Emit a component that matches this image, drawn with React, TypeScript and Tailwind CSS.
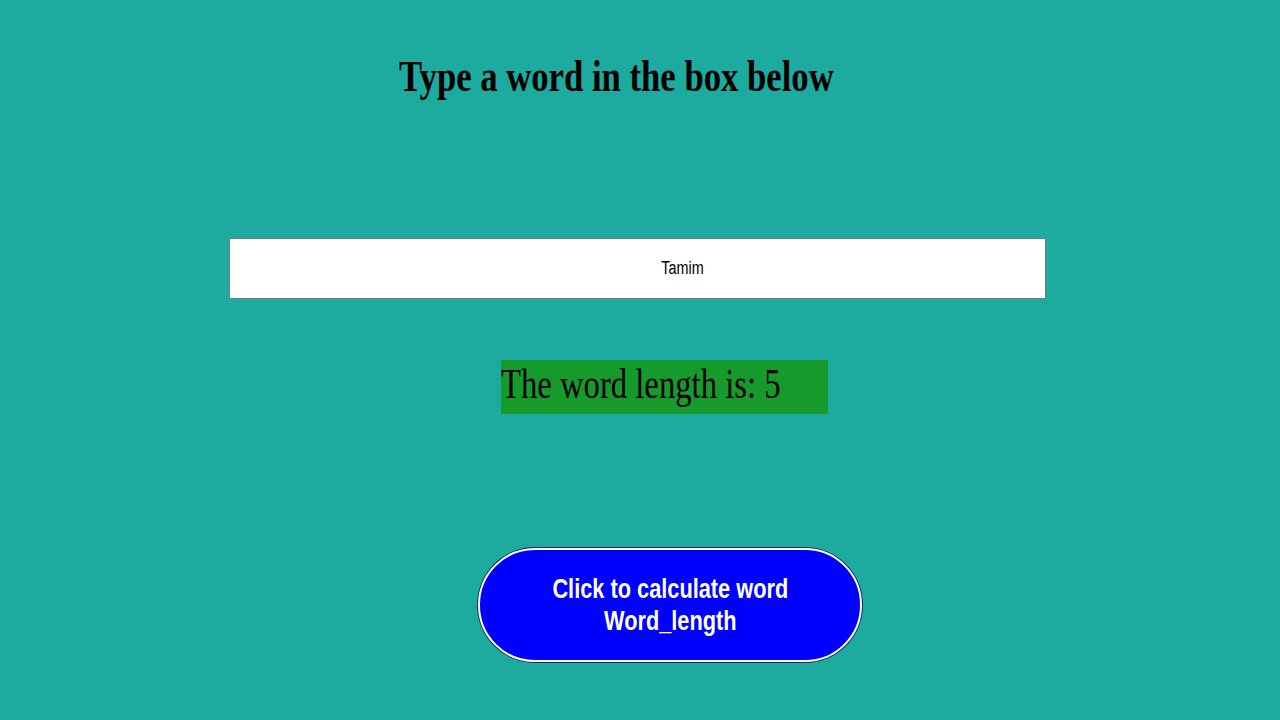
import React from "react";

export default function App() {
  return (
    <div className="w-[1280px] h-[720px] bg-[#1cab9e] overflow-hidden flex flex-col items-start">
      <h1
        className="mt-[52px] ml-[399px] h-[50px] leading-[50px] text-[44px] font-bold text-black whitespace-nowrap origin-left scale-x-[0.788] inline-block"
        style={{ fontFamily: '"Liberation Serif", "Times New Roman", serif' }}
      >
        Type a word in the box below
      </h1>
      <div className="mt-[136px] ml-[229px] w-[817px] h-[61px] bg-white border border-[#7a7a7a] flex items-center justify-center">
        <span
          className="ml-[90px] text-[18px] text-black inline-block scale-x-[0.8]"
          style={{ fontFamily: '"Liberation Sans", Arial, sans-serif' }}
        >
          Tamim
        </span>
      </div>
      <div className="mt-[61px] ml-[501px] w-[327px] h-[54px] bg-[#169a2c] flex items-start pt-[3px] overflow-hidden">
        <span
          className="text-[42px] leading-none text-black whitespace-nowrap inline-block origin-left scale-x-[0.778]"
          style={{ fontFamily: '"Liberation Serif", "Times New Roman", serif' }}
        >
          The word length is: 5
        </span>
      </div>
      <div className="mt-[134px] ml-[478px] w-[384px] h-[114px] rounded-full bg-[#0000ff] border-2 border-white ring-1 ring-[#1a2a6a] flex flex-col items-center justify-center">
        <div
          className="text-white font-bold text-[27px] leading-[32px] text-center inline-block scale-x-[0.806] whitespace-nowrap"
          style={{ fontFamily: '"Liberation Sans", Arial, sans-serif' }}
        >
          Click to calculate word
          <br />
          Word_length
        </div>
      </div>
    </div>
  );
}
